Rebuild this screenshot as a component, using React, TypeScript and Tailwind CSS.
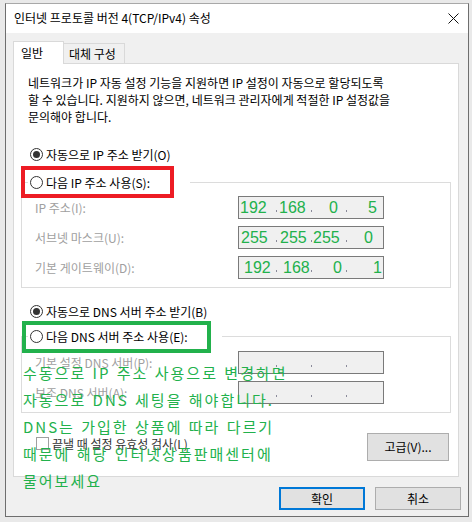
const ui = "font-['Noto_Sans_CJK_KR',sans-serif]";

type Field = { v: string; ml: string };

const staticRows: { label: string; fields: Field[] }[] = [
  {
    label: "IP 주소(I):",
    fields: [
      { v: "192", ml: "ml-[1px]" },
      { v: "168", ml: "ml-[2px]" },
      { v: "0", ml: "ml-[17px]" },
      { v: "5", ml: "ml-[21px]" },
    ],
  },
  {
    label: "서브넷 마스크(U):",
    fields: [
      { v: "255", ml: "ml-[2px]" },
      { v: "255", ml: "ml-[3px]" },
      { v: "255", ml: "ml-[1px]" },
      { v: "0", ml: "ml-[17px]" },
    ],
  },
  {
    label: "기본 게이트웨이(D):",
    fields: [
      { v: "192", ml: "ml-[5px]" },
      { v: "168", ml: "ml-[6px]" },
      { v: "0", ml: "ml-[21px]" },
      { v: "1", ml: "ml-[26px]" },
    ],
  },
];

const cellWidths = ["w-[37px]", "w-[35px]", "w-[35px]", "w-[37px]"];

function IpBox({ fields }: { fields?: Field[] }) {
  return (
    <div className="flex h-[23px] w-[146px] border border-[#7a7a7a] bg-[#f0f0f0]">
      {cellWidths.map((w, i) => (
        <div key={i} className={`flex h-full items-center ${w}`}>
          {i > 0 && <span className="mt-[6px] h-[2px] w-px shrink-0 bg-[#8a8a9a]" />}
          {fields && (
            <span
              className={`font-['Liberation_Sans',sans-serif] text-[16px] leading-[20px] text-[#22b14c] ${fields[i].ml}`}
            >
              {fields[i].v}
            </span>
          )}
        </div>
      ))}
    </div>
  );
}

function Radio({ checked, label }: { checked?: boolean; label: string }) {
  return (
    <div className="flex h-[17px] items-center gap-[3px]">
      <span className="flex h-[13px] w-[13px] items-center justify-center rounded-full border border-[#333333] bg-white">
        {checked && <span className="h-[7px] w-[7px] rounded-full bg-[#333333]" />}
      </span>
      <span className="text-[12px] leading-[17px] text-black">{label}</span>
    </div>
  );
}

function Row({ label, fields }: { label: string; fields?: Field[] }) {
  return (
    <div className="flex items-center">
      <span className="w-[216px] pl-[13px] text-[12px] leading-[17px] text-[#a0a0a0]">{label}</span>
      <IpBox fields={fields} />
    </div>
  );
}

export default function App() {
  return (
    <div className={`relative h-[522px] w-[472px] overflow-hidden bg-[#e9e9e9] pt-[3px] pl-[5px] ${ui}`}>
      <div className="w-[464px] border border-[#6e6e6e] border-t-[#a8a8a8]">
        {/* title bar */}
        <div className="flex h-[29px] items-center justify-between bg-white pb-[2px] pl-[8px] pr-[9px]">
          <span className="text-[12px] text-black">인터넷 프로토콜 버전 4(TCP/IPv4) 속성</span>
          <svg width="11" height="11" viewBox="0 0 11 11" className="mt-[2px]">
            <path d="M0.5 0.5 L10.5 10.5 M10.5 0.5 L0.5 10.5" stroke="#111" strokeWidth="1" />
          </svg>
        </div>

        {/* body */}
        <div className="flex flex-col bg-[#f0f0f0] pt-[8px] pb-[6px] pl-[7px] pr-[9px]">
          {/* tabs */}
          <div className="flex h-[22px] items-end">
            <div className="relative z-10 -mb-px h-[23px] w-[51px] border border-b-0 border-[#d9d9d9] bg-white pt-[2px] pl-[7px] text-[12px] leading-[17px]">
              일반
            </div>
            <div className="h-[20px] w-[61px] border border-l-0 border-b-0 border-[#d9d9d9] bg-[#f0f0f0] pt-px pl-[5px] text-[12px] leading-[17px]">
              대체 구성
            </div>
          </div>

          {/* panel */}
          <div className="flex flex-col border border-[#d9d9d9] bg-white pt-[10px] pb-[15px]">
            <p className="pl-[14px] text-[12px] leading-[17px] text-black">
              네트워크가 IP 자동 설정 기능을 지원하면 IP 설정이 자동으로 할당되도록
              <br />
              할 수 있습니다. 지원하지 않으면, 네트워크 관리자에게 적절한 IP 설정값을
              <br />
              문의해야 합니다.
            </p>

            <div className="mt-[21px] ml-[16px]">
              <Radio checked label="자동으로 IP 주소 받기(O)" />
            </div>

            <div className="mx-[7px] mt-[19px] flex flex-col border border-[#dcdcdc] pb-[8px]">
              <div className="-mt-[9px] ml-[6px] w-[162px] bg-white pl-[2px]">
                <Radio label="다음 IP 주소 사용(S):" />
              </div>
              <div className="mt-[5px] flex flex-col gap-[7px]">
                {staticRows.map((r) => (
                  <Row key={r.label} label={r.label} fields={r.fields} />
                ))}
              </div>
            </div>

            <div className="mt-[15px] ml-[16px]">
              <Radio checked label="자동으로 DNS 서버 주소 받기(B)" />
            </div>

            <div className="mx-[7px] mt-[16px] flex flex-col border border-[#dcdcdc] pb-[8px]">
              <div className="-mt-[9px] ml-[6px] w-[194px] bg-white pl-[2px]">
                <Radio label="다음 DNS 서버 주소 사용(E):" />
              </div>
              <div className="mt-[6px] flex flex-col gap-[7px]">
                <Row label="기본 설정 DNS 서버(P):" />
                <Row label="보조 DNS 서버(A):" />
              </div>
            </div>

            <div className="mt-[20px] flex items-start justify-between pl-[22px] pr-[9px]">
              <div className="mt-[2px] flex h-[17px] items-center gap-[3px]">
                <span className="h-[13px] w-[13px] border border-[#a0a0a0] bg-white" />
                <span className="text-[12px] leading-[17px] text-[#333333]">끝낼 때 설정 유효성 검사(L)</span>
              </div>
              <button className="h-[28px] w-[82px] border border-[#adadad] bg-[#e1e1e1] text-[12px] text-black">
                고급(V)...
              </button>
            </div>
          </div>

          {/* dialog buttons */}
          <div className="mt-[10px] flex justify-end gap-[10px]">
            <button className="h-[23px] w-[86px] border-2 border-[#0078d7] bg-[#e1e1e1] text-[12px] leading-[17px] text-black">
              확인
            </button>
            <button className="-mr-[2px] h-[23px] w-[86px] border border-[#adadad] bg-[#e1e1e1] text-[12px] leading-[17px] text-black">
              취소
            </button>
          </div>
        </div>
      </div>

      {/* annotations drawn over the dialog */}
      <div className="pointer-events-none absolute left-[21px] top-[166px] h-[32px] w-[153px] border-4 border-[#ed1c24]" />
      <div className="pointer-events-none absolute left-[22px] top-[321px] h-[32px] w-[189px] border-4 border-[#22b14c]" />
      <div className="pointer-events-none absolute left-[23px] top-[359px] text-[15px] leading-[27px] tracking-[2px] [word-spacing:1px] text-[#22b14c]">
        <div>수동으로 IP 주소 사용으로 변경하면</div>
        <div>자동으로 DNS 세팅을 해야합니다.</div>
        <div>DNS는 가입한 상품에 따라 다르기</div>
        <div>때문에 해당 인터넷상품판매센터에</div>
        <div>물어보세요</div>
      </div>
    </div>
  );
}
